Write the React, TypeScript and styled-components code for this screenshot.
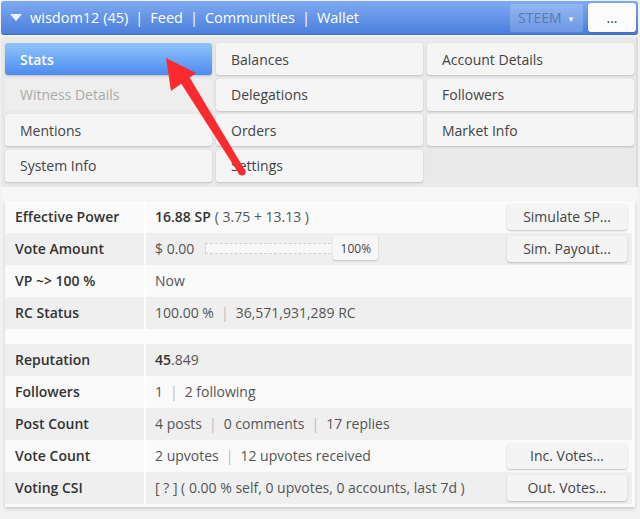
import styled, { createGlobalStyle } from 'styled-components';

const GlobalStyle = createGlobalStyle`
  body {
    margin: 0;
    background: #f1f1f1;
    font-family: "Open Sans", "Liberation Sans", sans-serif;
    color: #444;
  }
`;

const Page = styled.div`
  position: relative;
  width: 640px;
  height: 519px;
  overflow: hidden;
  padding: 1px 2px 0 1px;
  box-sizing: border-box;
`;

const Header = styled.div`
  height: 34px;
  box-sizing: border-box;
  display: flex;
  align-items: center;
  padding: 0 2px 0 9px;
  border-radius: 3px;
  background: linear-gradient(#7faaf3, #4b7fdb);
  border-bottom: 1px solid #3f6fc8;
  color: #fff;
  font-size: 14.5px;
`;

const Caret = styled.span`
  width: 0;
  height: 0;
  border-left: 6px solid transparent;
  border-right: 6px solid transparent;
  border-top: 7px solid #eef2fb;
  margin-right: 8px;
`;

const NavLink = styled.span`
  color: #fff;
`;

const NavSep = styled.span`
  margin: 0 7px;
`;

const HeaderRight = styled.div`
  margin-left: auto;
  display: flex;
  align-items: center;
  gap: 5px;
`;

const CoinSelect = styled.div`
  width: 73px;
  height: 28px;
  box-sizing: border-box;
  display: flex;
  align-items: center;
  padding-left: 8px;
  background: rgba(255, 255, 255, 0.18);
  border-radius: 2px;
  color: #5678b4;
  font-size: 14px;
  position: relative;
`;

const SelectArrow = styled.span`
  position: absolute;
  right: 8px;
  top: 9px;
  font-size: 8px;
  color: #eef;
`;

const MoreButton = styled.div`
  width: 48px;
  height: 29px;
  background: #fbfbfb;
  border-radius: 3px;
  color: #444;
  font-size: 14px;
  display: flex;
  align-items: center;
  justify-content: center;
  box-shadow: 0 1px 2px rgba(0, 0, 0, 0.2);
`;

const MenuPanel = styled.div`
  margin-top: 2px;
  background: #e9e9e9;
  border-right: 2px solid #dcdcdc;
  padding: 6px 2px 5px 4px;
  display: grid;
  grid-template-columns: repeat(3, 207px);
  grid-auto-rows: 32px;
  column-gap: 4px;
  row-gap: 3.5px;
`;

const MenuButton = styled.div<{ $active?: boolean; $disabled?: boolean }>`
  display: flex;
  align-items: center;
  padding-left: 15px;
  font-size: 14px;
  border-radius: 3px;
  color: ${(p) => (p.$active ? '#fff' : p.$disabled ? '#aaa' : '#444')};
  font-weight: ${(p) => (p.$active ? 600 : 400)};
  background: ${(p) =>
    p.$active ? 'linear-gradient(#8fc5fc, #4d8bef)' : p.$disabled ? '#eeeeee' : '#f5f5f5'};
  box-shadow: ${(p) => (p.$disabled ? 'none' : '0 1px 2px rgba(0, 0, 0, 0.18)')};
`;

const Strip = styled.div`
  height: 14px;
  background: #f6f6f6;
`;

const Card = styled.div`
  margin: 0 3px 0 4px;
  background: #fbfbfb;
  padding-right: 3px;
  padding-bottom: 3px;
  box-shadow: 0 2px 3px rgba(0, 0, 0, 0.15);
`;

const Row = styled.div<{ $gray?: boolean }>`
  display: grid;
  grid-template-columns: 141px 1fr auto;
  align-items: center;
  height: 32px;
  background: ${(p) => (p.$gray ? '#efefef' : '#fafafa')};
  font-size: 14px;
`;

const Spacer = styled.div`
  height: 15px;
  background: #fbfbfb;
`;

const Label = styled.div`
  height: 100%;
  display: flex;
  align-items: center;
  padding-left: 10px;
  border-right: 2px solid #fdfdfd;
  color: #333;
  font-weight: 600;
`;

const Value = styled.div`
  padding-left: 9px;
  color: #555;
  display: flex;
  align-items: center;
  white-space: nowrap;
`;

const Strong = styled.span`
  color: #333;
  font-weight: 600;
  margin-right: 4px;
`;

const Bold = styled.span`
  color: #333;
  font-weight: 600;
`;

const Sep = styled.span`
  color: #bbb;
  margin: 0 7px;
`;

const ActionButton = styled.div`
  width: 120px;
  height: 26px;
  margin-right: 5px;
  border-radius: 3px;
  background: #f4f4f4;
  box-shadow: 0 1px 2px rgba(0, 0, 0, 0.22);
  display: flex;
  align-items: center;
  justify-content: center;
  color: #444;
  font-size: 14px;
`;

const Slider = styled.div`
  position: relative;
  width: 134px;
  height: 9px;
  margin-left: 11px;
  border: 1px dashed #d0d0d0;
  background: #f7f7f7;
`;

const Handle = styled.div`
  position: absolute;
  right: -38px;
  top: -8px;
  width: 45px;
  height: 24px;
  border-radius: 3px;
  background: #f7f7f7;
  box-shadow: 0 1px 2px rgba(0, 0, 0, 0.2);
  font-size: 12px;
  color: #444;
  display: flex;
  align-items: center;
  justify-content: center;
`;

const ArrowOverlay = styled.svg`
  position: absolute;
  left: 0;
  top: 0;
  pointer-events: none;
`;

const navItems = ['wisdom12 (45)', 'Feed', 'Communities', 'Wallet'];

const menu = [
  { label: 'Stats', active: true },
  { label: 'Balances' },
  { label: 'Account Details' },
  { label: 'Witness Details', disabled: true },
  { label: 'Delegations' },
  { label: 'Followers' },
  { label: 'Mentions' },
  { label: 'Orders' },
  { label: 'Market Info' },
  { label: 'System Info' },
  { label: 'Settings' },
];

export default function App() {
  return (
    <Page>
      <GlobalStyle />
      <Header>
        <Caret />
        {navItems.map((item, i) => (
          <span key={item}>
            <NavLink>{item}</NavLink>
            {i < navItems.length - 1 && <NavSep>|</NavSep>}
          </span>
        ))}
        <HeaderRight>
          <CoinSelect>
            STEEM
            <SelectArrow>▼</SelectArrow>
          </CoinSelect>
          <MoreButton>...</MoreButton>
        </HeaderRight>
      </Header>

      <MenuPanel>
        {menu.map((m) => (
          <MenuButton key={m.label} $active={m.active} $disabled={m.disabled}>
            {m.label}
          </MenuButton>
        ))}
      </MenuPanel>

      <Strip />

      <Card>
        <Row>
          <Label>Effective Power</Label>
          <Value>
            <Strong>16.88 SP</Strong>( 3.75 + 13.13 )
          </Value>
          <ActionButton>Simulate SP...</ActionButton>
        </Row>
        <Row $gray>
          <Label>Vote Amount</Label>
          <Value>
            $ 0.00
            <Slider>
              <Handle>100%</Handle>
            </Slider>
          </Value>
          <ActionButton>Sim. Payout...</ActionButton>
        </Row>
        <Row>
          <Label>VP ~&gt; 100 %</Label>
          <Value>Now</Value>
        </Row>
        <Row $gray>
          <Label>RC Status</Label>
          <Value>
            100.00 %<Sep>|</Sep>36,571,931,289 RC
          </Value>
        </Row>
        <Spacer />
        <Row $gray>
          <Label>Reputation</Label>
          <Value>
            <Bold>45</Bold>.849
          </Value>
        </Row>
        <Row>
          <Label>Followers</Label>
          <Value>
            1<Sep>|</Sep>2 following
          </Value>
        </Row>
        <Row $gray>
          <Label>Post Count</Label>
          <Value>
            4 posts<Sep>|</Sep>0 comments<Sep>|</Sep>17 replies
          </Value>
        </Row>
        <Row>
          <Label>Vote Count</Label>
          <Value>
            2 upvotes<Sep>|</Sep>12 upvotes received
          </Value>
          <ActionButton>Inc. Votes...</ActionButton>
        </Row>
        <Row $gray>
          <Label>Voting CSI</Label>
          <Value>[ ? ] ( 0.00 % self, 0 upvotes, 0 accounts, last 7d )</Value>
          <ActionButton>Out. Votes...</ActionButton>
        </Row>
      </Card>

      <ArrowOverlay width="640" height="519" viewBox="0 0 640 519">
        <polygon points="166,58 171,91 196,73" fill="#fb2a2e" />
        <polygon points="180.5,82.6 189.5,77.2 245,170.2 239,173.8" fill="#fb2a2e" />
        <circle cx="242" cy="172" r="3.6" fill="#fb2a2e" />
      </ArrowOverlay>
    </Page>
  );
}
